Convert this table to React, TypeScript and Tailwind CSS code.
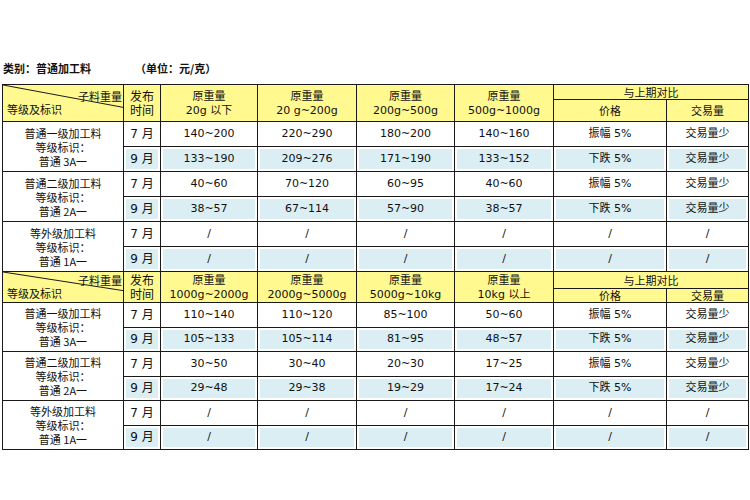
const CJK = "font-['Noto_Sans_CJK_SC',sans-serif]"
const NUM = "font-['DejaVu_Sans','Noto_Sans_CJK_SC',sans-serif]"

type Block = {
  sizes: string[]
  headH: [string, string]
  rowH: string
  groups: { label: string[]; rows: string[][] }[]
}

const none = ['/', '/', '/', '/', '/', '/']

const blocks: Block[] = [
  {
    sizes: ['20g 以下', '20 g~200g', '200g~500g', '500g~1000g'],
    headH: ['h-[15px]', 'h-[22px]'],
    rowH: 'h-[25px]',
    groups: [
      {
        label: ['普通一级加工料', '等级标识：', '普通 3A一'],
        rows: [
          ['140~200', '220~290', '180~200', '140~160', '振幅 5%', '交易量少'],
          ['133~190', '209~276', '171~190', '133~152', '下跌 5%', '交易量少'],
        ],
      },
      {
        label: ['普通二级加工料', '等级标识：', '普通 2A一'],
        rows: [
          ['40~60', '70~120', '60~95', '40~60', '振幅 5%', '交易量少'],
          ['38~57', '67~114', '57~90', '38~57', '下跌 5%', '交易量少'],
        ],
      },
      { label: ['等外级加工料', '等级标识：', '普通 1A一'], rows: [none, none] },
    ],
  },
  {
    sizes: ['1000g~2000g', '2000g~5000g', '5000g~10kg', '10kg 以上'],
    headH: ['h-[17px]', 'h-[14px]'],
    rowH: 'h-[24.5px]',
    groups: [
      {
        label: ['普通一级加工料', '等级标识：', '普通 3A一'],
        rows: [
          ['110~140', '110~120', '85~100', '50~60', '振幅 5%', '交易量少'],
          ['105~133', '105~114', '81~95', '48~57', '下跌 5%', '交易量少'],
        ],
      },
      {
        label: ['普通二级加工料', '等级标识：', '普通 2A一'],
        rows: [
          ['30~50', '30~40', '20~30', '17~25', '振幅 5%', '交易量少'],
          ['29~48', '29~38', '19~29', '17~24', '下跌 5%', '交易量少'],
        ],
      },
      { label: ['等外级加工料', '等级标识：', '普通 1A一'], rows: [none, none] },
    ],
  },
]

const cell = 'border border-[#1a1a1a] p-0 text-center align-middle'
const yellow = 'bg-[#fff98f]'
const blue = 'bg-[#daeef3] shadow-[inset_0_0_0_2px_white]'

const BlockRows = ({ block }: { block: Block }) => (
  <>
    <tr className={block.headH[0]}>
      <td rowSpan={2} className={`${cell} ${yellow} relative text-[11px] ${CJK}`}>
        <svg className="absolute inset-0 w-full h-full" preserveAspectRatio="none" viewBox="0 0 100 100">
          <line x1="0" y1="0" x2="100" y2="62" stroke="#1a1a1a" strokeWidth="1" vectorEffect="non-scaling-stroke" />
        </svg>
        <div className="relative flex flex-col h-full justify-between leading-[13px] py-[2px]">
          <div className="text-right pr-[1px]">子料重量</div>
          <div className="text-left pl-[4px]">等级及标识</div>
        </div>
      </td>
      <td rowSpan={2} className={`${cell} ${yellow} text-[12px] leading-[14px] ${CJK}`}>
        发布
        <br />
        时间
      </td>
      {block.sizes.map((s) => (
        <td key={s} rowSpan={2} className={`${cell} ${yellow} text-[11px] leading-[14px] ${CJK}`}>
          原重量
          <br />
          <span className={NUM}>{s}</span>
        </td>
      ))}
      <td colSpan={2} className={`${cell} ${yellow} text-[11px] leading-none ${CJK}`}>
        与上期对比
      </td>
    </tr>
    <tr className={block.headH[1]}>
      <td className={`${cell} ${yellow} text-[11px] leading-none ${CJK}`}>价格</td>
      <td className={`${cell} ${yellow} text-[11px] leading-none ${CJK}`}>交易量</td>
    </tr>
    {block.groups.map((g) =>
      g.rows.map((r, i) => (
        <tr key={g.label[0] + i} className={block.rowH}>
          {i === 0 && (
            <td rowSpan={2} className={`${cell} bg-white text-[11px] leading-[14px] ${CJK}`}>
              {g.label.map((l) => (
                <div key={l}>{l}</div>
              ))}
            </td>
          )}
          <td className={`${cell} ${i === 1 ? blue : 'bg-white'} text-[12px] ${NUM}`}>
            {i === 0 ? '7' : '9'} 月
          </td>
          {r.map((v, j) => (
            <td key={j} className={`${cell} ${i === 1 ? blue : 'bg-white'} text-[11px] ${NUM}`}>
              {v}
            </td>
          ))}
        </tr>
      )),
    )}
  </>
)

export default function App() {
  return (
    <div className="w-[750px] h-[500px] bg-white text-[#111] pt-[56px] px-[2px]">
      <div className={`flex h-[24px] mb-[4px] items-center text-[11px] font-bold ${CJK}`}>
        <span className="w-[133px] pl-[1px]">类别：普通加工料</span>
        <span>（单位：元/克）</span>
      </div>
      <table className="table-fixed border-collapse w-[746px]">
        <colgroup>
          <col className="w-[121px]" />
          <col className="w-[37px]" />
          <col className="w-[97px]" />
          <col className="w-[99px]" />
          <col className="w-[98px]" />
          <col className="w-[99px]" />
          <col className="w-[113px]" />
          <col className="w-[82px]" />
        </colgroup>
        <tbody>
          {blocks.map((b, i) => (
            <BlockRows key={i} block={b} />
          ))}
        </tbody>
      </table>
    </div>
  )
}
